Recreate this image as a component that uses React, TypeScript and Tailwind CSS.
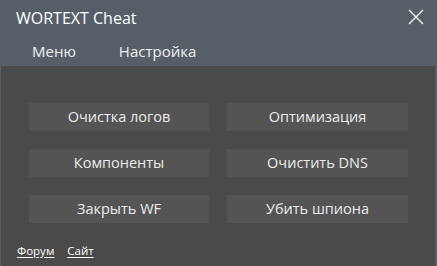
const buttons = [
  'Очистка логов',
  'Оптимизация',
  'Компоненты',
  'Очистить DNS',
  'Закрыть WF',
  'Убить шпиона',
]

const App = () => {
  return (
    <div
      className="w-[437px] h-[266px] flex flex-col bg-[#565f68] overflow-hidden"
      style={{ fontFamily: '"Open Sans", "Noto Sans", sans-serif' }}
    >
      {/* Title bar */}
      <div className="h-[36px] flex items-center justify-between pl-[16px] pr-[13px] shrink-0">
        <span className="text-[16px] text-white">WORTEXT Cheat</span>
        <svg width="16" height="16" viewBox="0 0 16 16" className="mb-[3px]">
          <path d="M1 1 L15 15 M15 1 L1 15" stroke="#fff" strokeWidth="1.3" fill="none" />
        </svg>
      </div>

      {/* Menu */}
      <div className="h-[30px] flex items-center gap-[43px] pl-[32px] shrink-0 text-[15px] text-[#f0f0f0]">
        <span>Меню</span>
        <span>Настройка</span>
      </div>

      {/* Body */}
      <div className="flex-1 ml-[1px] mr-[2px] bg-[#4a4a4a] flex flex-col">
        <div className="grid grid-cols-[180px_181px] gap-x-[18px] gap-y-[18px] pl-[28px] pt-[37px]">
          {buttons.map(label => (
            <button
              key={label}
              className="h-[28px] bg-[#545454] text-[14.5px] text-[#ececec] flex items-center justify-center"
            >
              {label}
            </button>
          ))}
        </div>
        <div className="mt-auto mb-[7px] flex gap-[13px] pl-[16px] text-[11.5px] text-white">
          <span className="underline underline-offset-2">Форум</span>
          <span className="underline underline-offset-2">Сайт</span>
        </div>
      </div>
    </div>
  )
}

export default App
